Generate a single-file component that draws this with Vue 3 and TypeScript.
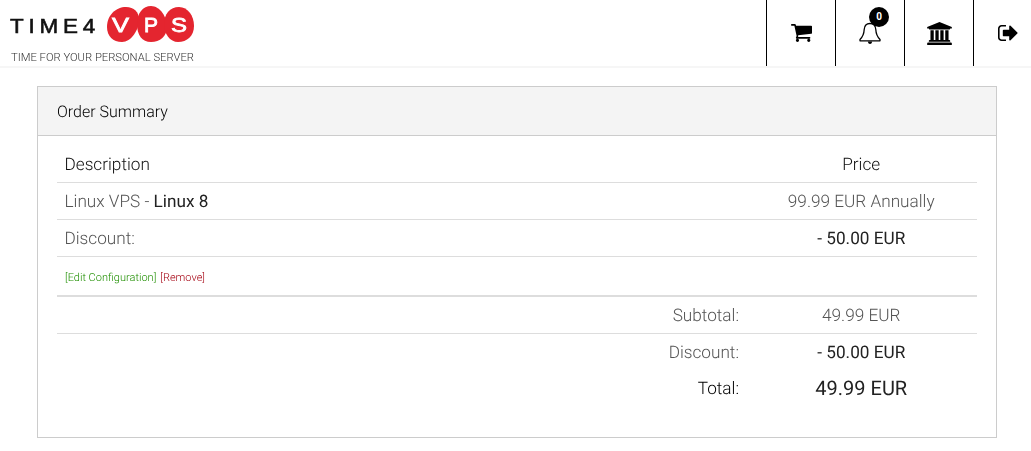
<template>
  <header class="header">
    <svg class="logo" width="200" height="66" viewBox="0 0 200 66">
      <text class="logo-word" x="10" y="33" textLength="90" lengthAdjust="spacingAndGlyphs">TIME4</text>
      <path d="M107 27C107 15 116 7 126 7C134 7 139 12 139 20C139 30 131 42 122 42C113 42 107 36 107 27z" fill="#e4252f" />
      <path d="M137 24C137 13 143 6 151 6C160 6 167 17 167 27C167 36 160 42 151 42C142 42 137 35 137 24z" fill="#e4252f" />
      <path d="M164 24C164 14 170 7 179 7C188 7 194 16 194 26C194 36 187 42 178 42C170 42 164 34 164 24z" fill="#e4252f" />
      <text class="logo-letter" x="112" y="32" textLength="17" lengthAdjust="spacingAndGlyphs">V</text>
      <text class="logo-letter" x="144" y="32" textLength="14" lengthAdjust="spacingAndGlyphs">P</text>
      <text class="logo-letter" x="171" y="32" textLength="16" lengthAdjust="spacingAndGlyphs">S</text>
      <text class="logo-tag" x="11" y="61" textLength="183" lengthAdjust="spacingAndGlyphs">TIME FOR YOUR PERSONAL SERVER</text>
    </svg>
    <nav class="nav">
      <a class="nav-item">
        <svg width="21" height="18" viewBox="64 256 1664 1408">
          <path d="M704 1536q0 52-38 90t-90 38-90-38-38-90 38-90 90-38 90 38 38 90zm896 0q0 52-38 90t-90 38-90-38-38-90 38-90 90-38 90 38 38 90zm128-1088v512q0 24-16.500 42.500t-40.500 21.500l-1044 122q13 60 13 70 0 16-24 64h920q26 0 45 19t19 45-19 45-45 19h-1024q-26 0-45-19t-19-45q0-11 8-31.500t16-36 21.500-40 15.500-29.500l-177-823h-204q-26 0-45-19t-19-45 19-45 45-19h256q16 0 28.500 6.500t19.500 15.500 13 24.500 8 26 5.500 29.500 4.500 26h1201q26 0 45 19t19 45z" />
        </svg>
      </a>
      <a class="nav-item">
        <svg width="22" height="23" viewBox="0 0 22 23">
          <path d="M11 1.500c3.600 0 5.600 2.700 5.800 6 .2 4.400 1.500 7.300 4.200 10v1.300H1v-1.300c2.700-2.700 4-5.600 4.200-10 .2-3.300 2.200-6 5.800-6z" fill="#fff" stroke="#000" stroke-width="1.300" stroke-linejoin="round" />
          <path d="M8.800 19.500c.3 1.700 1.100 2.500 2.200 2.500s1.900-.8 2.200-2.500z" />
        </svg>
        <span class="badge">0</span>
      </a>
      <a class="nav-item">
        <svg width="25" height="23" viewBox="0 0 1920 1792">
          <path d="M960 0l960 384v128h-128q0 26-20.500 45t-48.500 19h-1526q-28 0-48.500-19t-20.500-45h-128v-128zm-704 640h256v768h128v-768h256v768h128v-768h256v768h128v-768h256v768h59q28 0 48.500 19t20.500 45v64h-1664v-64q0-26 20.500-45t48.500-19h59v-768zm1595 960q28 0 48.500 19t20.500 45v128h-1920v-128q0-26 20.500-45t48.500-19h1782z" />
        </svg>
      </a>
      <a class="nav-item">
        <svg width="20" height="16" viewBox="64 256 1600 1280">
          <path d="M704 1440q0 4 1 20t.5 26.500-3 23.500-10 19.500-20.500 6.500h-320q-119 0-203.500-84.500t-84.500-203.500v-704q0-119 84.500-203.500t203.500-84.500h320q13 0 22.500 9.500t9.500 22.500q0 4 1 20t.5 26.500-3 23.500-10 19.500-20.500 6.500h-320q-66 0-113 47t-47 113v704q0 66 47 113t113 47h312l11.500 1 11.500 3 8 5.500 7 9 2 13.500zm928-544q0 26-19 45l-544 544q-19 19-45 19t-45-19-19-45v-288h-448q-26 0-45-19t-19-45v-384q0-26 19-45t45-19h448v-288q0-26 19-45t45-19 45 19l544 544q19 19 19 45z" />
        </svg>
      </a>
    </nav>
  </header>

  <main class="page">
    <section class="panel">
      <h2 class="panel-title">Order Summary</h2>
      <div class="panel-body">
        <div class="row row-head">
          <div class="cell">Description</div>
          <div class="cell price">Price</div>
        </div>
        <div class="row">
          <div class="cell muted">Linux VPS - <span class="dark">Linux 8</span></div>
          <div class="cell price muted">99.99 EUR Annually</div>
        </div>
        <div class="row">
          <div class="cell muted">Discount:</div>
          <div class="cell price dark">- 50.00 EUR</div>
        </div>
        <div class="row row-links">
          <div class="cell links">
            <a class="edit">[Edit Configuration]</a>
            <a class="remove">[Remove]</a>
          </div>
        </div>
        <div
          v-for="line in totals"
          :key="line.label"
          class="row row-total"
          :class="line.kind"
        >
          <div class="cell label">{{ line.label }}</div>
          <div class="cell price">{{ line.value }}</div>
        </div>
      </div>
    </section>
  </main>
</template>

<script setup lang="ts">
interface TotalLine {
  label: string
  value: string
  kind: string
}

const totals: TotalLine[] = [
  { label: 'Subtotal:', value: '49.99 EUR', kind: 'subtotal' },
  { label: 'Discount:', value: '- 50.00 EUR', kind: 'discount' },
  { label: 'Total:', value: '49.99 EUR', kind: 'total' }
]
</script>

<style>
body {
  background: #fff;
}
</style>

<style scoped>
.header {
  display: flex;
  justify-content: space-between;
  height: 66px;
  border-bottom: 2px solid #f6f6f6;
}

.logo {
  will-change: transform;
}

.logo-word {
  font-family: "Liberation Sans", sans-serif;
  font-size: 21px;
  letter-spacing: 4.500px;
  fill: #111;
  stroke: #111;
  stroke-width: 0.6px;
}

.logo-letter {
  font-family: "Liberation Sans", sans-serif;
  font-size: 21px;
  fill: #fff;
  stroke: #fff;
  stroke-width: 0.8px;
}

.logo-tag {
  font-family: Roboto, sans-serif;
  font-size: 10.500px;
  font-weight: 300;
  fill: #333;
}

.nav {
  display: flex;
}

.nav-item {
  position: relative;
  display: flex;
  align-items: center;
  justify-content: center;
  width: 68px;
  border-left: 1px solid #000;
}

.nav-item:last-child {
  width: 58px;
  padding-left: 10px;
  box-sizing: border-box;
}

.badge {
  position: absolute;
  top: 7px;
  left: 33px;
  width: 20px;
  height: 20px;
  border-radius: 50%;
  background: #000;
  color: #fff;
  font-family: Roboto, sans-serif;
  font-size: 10px;
  font-weight: 700;
  line-height: 20px;
  text-align: center;
}

.page {
  padding: 18px 34px 0 37px;
  font-family: Roboto, sans-serif;
  font-weight: 300;
  text-rendering: geometricPrecision;
  will-change: transform;
}

.panel {
  border: 1px solid #ccc;
  height: 352px;
  box-sizing: border-box;
}

.panel-title {
  margin: 0;
  height: 49px;
  padding-left: 19px;
  background: #f4f4f4;
  border-bottom: 1px solid #ccc;
  box-sizing: border-box;
  font-size: 16px;
  font-weight: 300;
  line-height: 50px;
  color: #000;
}

.panel-body {
  padding: 10px 19px 0;
}

.row {
  display: grid;
  grid-template-columns: 1fr 231px;
  height: 37px;
  box-sizing: border-box;
  border-bottom: 1px solid #ddd;
  font-size: 17.200px;
  line-height: 38px;
}

.row-head {
  color: #111;
}

.cell {
  padding: 0 8px 0 7.500px;
}

.price {
  text-align: center;
}

.muted {
  color: #555;
}

.dark {
  color: #222;
  font-weight: 400;
}

.row-links {
  height: 40px;
  border-bottom: 2px solid #ddd;
}

.links {
  grid-column: 1 / 3;
  display: flex;
  gap: 4px;
  padding-left: 8px;
  font-size: 11px;
  line-height: 41px;
}

.edit {
  color: #1f8f00;
}

.remove {
  color: #a50010;
}

.label {
  padding-right: 7px;
  text-align: right;
}

.subtotal {
  color: #555;
}

.discount {
  border-bottom: 0;
  color: #555;
}

.discount .price {
  color: #222;
  font-weight: 400;
}

.total {
  border-bottom: 0;
  color: #000;
  line-height: 36px;
}

.total .price {
  color: #222;
  font-size: 20px;
  font-weight: 400;
  line-height: 35px;
}
</style>
